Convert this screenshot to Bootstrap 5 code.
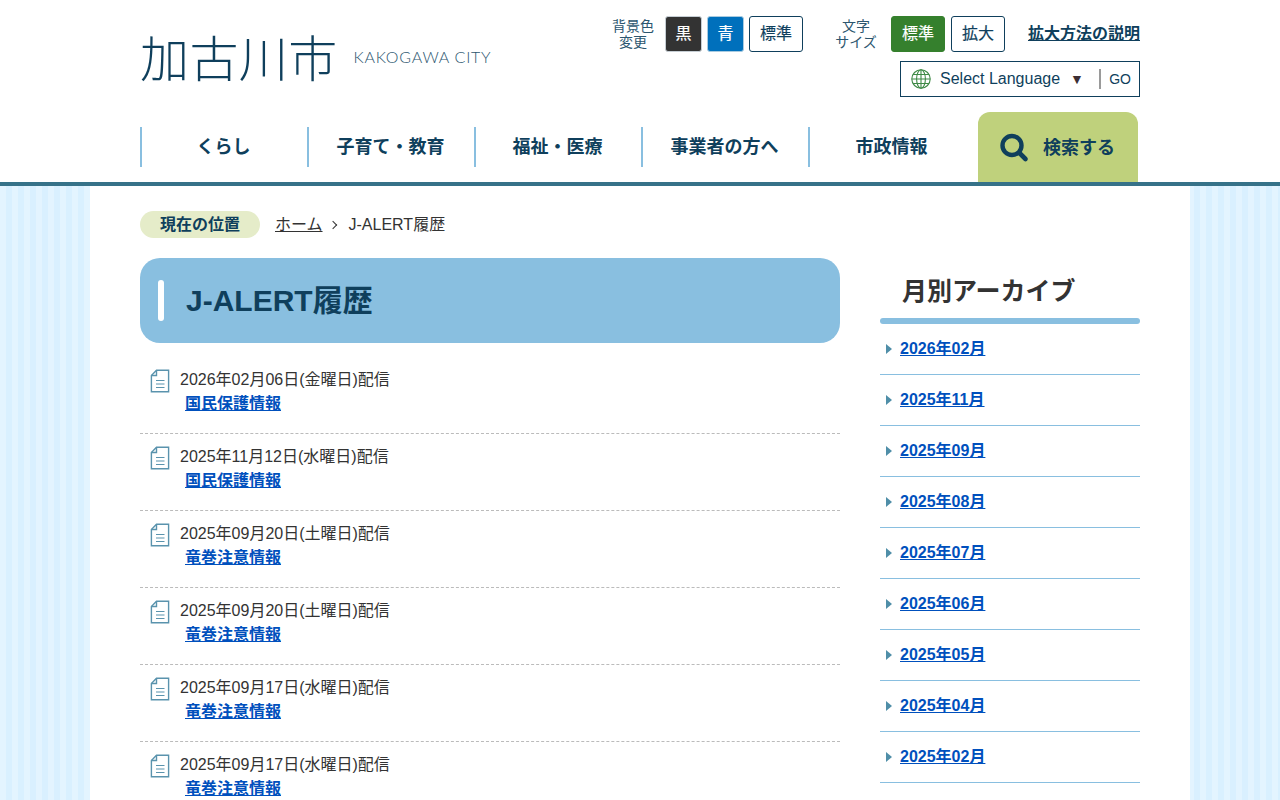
<!DOCTYPE html>
<html lang="ja">
<head>
<meta charset="utf-8">
<title>J-ALERT履歴</title>
<link href="https://cdn.jsdelivr.net/npm/bootstrap@5.3.0/dist/css/bootstrap.min.css" rel="stylesheet">
<style>
:root{--ink:#0f3f5c;--sky:#89bfe0;--txt:#333;}
html,body{height:800px;overflow:hidden}
body{font-family:"Liberation Sans","Noto Sans CJK JP",sans-serif;font-size:16px;color:var(--txt);line-height:24px;background:#fff}
.wrap{width:1000px;margin:0 auto}
.site-head{height:186px;border-bottom:4px solid #367289;background:#fff}
.head-top{height:112px}
.logo-ja{font-family:"Noto Sans CJK JP",sans-serif;font-weight:300;font-size:49px;line-height:60px;color:var(--ink);letter-spacing:.4px;margin-top:26px;white-space:nowrap;-webkit-text-stroke:0}
.logo-en{font-family:Lato,sans-serif;font-weight:300;font-size:16px;line-height:20px;color:#2c566f;letter-spacing:.75px;margin-left:16px;margin-top:21px;white-space:nowrap}
.tools{padding-top:16px;width:529px}
.tool-label{font-size:14px;line-height:16px;color:#2c566f;text-align:center}
.tool-btn{height:36px;border:1px solid var(--ink);border-radius:3px;background:#fff;color:var(--ink);font-size:16px;line-height:34px;font-weight:400;padding:0;text-align:center;-webkit-text-stroke:.2px}
.tb-dark{width:37px;background:#333;color:#fff;border-color:#c6ced4;box-shadow:0 0 0 1px #3334 inset}
.tb-blue{width:37px;background:#0070bc;color:#fff;border-color:#a9cbe0}
.tb-std{width:54px}
.tb-green{width:54px;background:#35802d;color:#fff;border-color:#35802d}
.how-to{color:var(--ink);font-weight:700;font-size:16px;text-decoration:underline}
.lang-box{width:240px;height:36px;border:1px solid var(--ink);margin-top:9px;color:var(--ink);padding-left:10px}
.lang-txt{margin-left:9px;line-height:34px;white-space:nowrap}
.lang-arrow{margin-left:10px;font-size:14px;color:#3c2e34;width:14px;line-height:34px}
.lang-go{border-left:2px solid #9a9a9a;height:20px;line-height:20px;font-size:14px;padding-left:8px;margin-left:auto;margin-right:8px}
.gnav{height:70px}
.gnav-item{width:167px;height:40px;margin-top:15px;border-left:2px solid var(--sky);color:var(--ink);font-weight:700;font-size:18px;line-height:40px;text-align:center;text-decoration:none;padding-right:2px}
.gnav-search{width:160px;height:70px;margin-left:3px;background:#bfd17c;border-radius:12px 12px 0 0;color:var(--ink);font-weight:700;font-size:18px;text-decoration:none;padding-left:21px;padding-top:1px}
.gnav-search svg{margin-right:14px}
.stage{height:614px;overflow:hidden;background:repeating-linear-gradient(90deg,#e3f4ff 0 6px,#d9f0ff 6px 12px)}
.sheet{width:1100px;height:100%;margin:0 auto;background:#fff;padding:25px 50px 0}
.crumbs{height:27px;font-size:16px}
.crumb-tag{width:120px;height:27px;line-height:27px;border-radius:14px;background:#e5ecc9;color:var(--ink);font-weight:700;text-align:center}
.crumb-home{color:var(--txt);margin-left:15px}
.crumb-sep{width:6px;height:6px;border-top:1.5px solid #333;border-right:1.5px solid #333;transform:rotate(45deg);margin:0 13px 0 7px}
.columns{margin-top:20px}
.main-col{width:700px}
.side-col{width:260px}
.page-title{height:85px;background:var(--sky);border-radius:20px;margin:0;padding:0 18px;color:var(--ink);font-size:30px;font-weight:700;line-height:85px}
.page-title::before{content:"";width:6px;height:41px;border-radius:3px;background:#fff;margin-right:22px;flex:none}
.feed{margin-top:14px}
.feed-row{height:77px;border-bottom:1px dashed #bbb;padding:11px 0 0 10px}
.feed-row:last-child{border-bottom:0}
.feed-ico{flex:none;margin-top:1px;margin-right:10px}
.feed-link,.arch-link{color:#0050bd;font-weight:700}
.feed-link{margin-left:5px;display:inline-block}
.arch-title{font-size:25px;line-height:36px;font-weight:700;margin:15px 0 0;padding-left:22px;padding-bottom:9px;color:var(--txt);border:0}
.arch-bar{height:6px;border-radius:3px;background:var(--sky)}
.arch-row{height:51px;border-bottom:1px solid var(--sky);padding:0 0 0 6px}
.arch-row::before{content:"";width:0;height:0;border-left:6px solid #4f8ea8;border-top:5px solid transparent;border-bottom:5px solid transparent;margin-right:8px}
</style>
</head>
<body>
<header class="site-head">
  <div class="wrap">
    <div class="head-top d-flex justify-content-between">
      <div class="d-flex align-items-start">
        <div class="logo-ja">加古川市</div>
        <div class="logo-en" style="margin-top:47px">KAKOGAWA CITY</div>
      </div>
      <div class="tools">
        <div class="d-flex align-items-center">
          <div class="tool-label" style="width:44px;margin-right:10px;margin-left:0">背景色<br>変更</div>
          <button class="tool-btn tb-dark me-1" type="button">黒</button>
          <button class="tool-btn tb-blue" type="button" style="margin-left:1px;margin-right:5px">青</button>
          <button class="tool-btn tb-std" type="button">標準</button>
          <div class="tool-label" style="width:46px;margin-left:30px;margin-right:12px">文字<br>サイズ</div>
          <button class="tool-btn tb-green" type="button" style="margin-right:6px">標準</button>
          <button class="tool-btn tb-std" type="button">拡大</button>
          <a class="how-to ms-auto" href="#">拡大方法の説明</a>
        </div>
        <div class="d-flex justify-content-end">
          <div class="lang-box d-flex align-items-center">
            <svg width="20" height="20" viewBox="0 0 20 20" fill="none" stroke="#3f8a46" stroke-width="1.1"><circle cx="10" cy="10" r="9.2"/><ellipse cx="10" cy="10" rx="4.4" ry="9.2"/><path d="M10 .8v18.4M.8 10h18.4M2 5.5h16M2 14.5h16"/></svg>
            <span class="lang-txt">Select Language</span>
            <span class="lang-arrow">▼</span>
            <span class="lang-go">GO</span>
          </div>
        </div>
      </div>
    </div>
    <nav class="gnav d-flex">
      <a class="gnav-item" href="#">くらし</a>
      <a class="gnav-item" href="#">子育て・教育</a>
      <a class="gnav-item" href="#">福祉・医療</a>
      <a class="gnav-item" href="#">事業者の方へ</a>
      <a class="gnav-item" href="#" style="border-left-color:var(--sky)">市政情報</a>
      <a class="gnav-search d-flex align-items-center" href="#">
        <svg width="30" height="30" viewBox="0 0 30 30" fill="none" stroke="#0f3f5c"><circle cx="13" cy="12.5" r="9.5" stroke-width="4.4"/><path d="M20.5 20l6 6" stroke-width="4.6" stroke-linecap="round"/></svg>
        <span>検索する</span>
      </a>
    </nav>
  </div>
</header>
<div class="stage">
  <div class="sheet">
    <div class="crumbs d-flex align-items-center">
      <span class="crumb-tag">現在の位置</span>
      <a class="crumb-home" href="#">ホーム</a>
      <span class="crumb-sep"></span>
      <span>J-ALERT履歴</span>
    </div>
    <div class="columns d-flex justify-content-between">
      <main class="main-col">
        <h1 class="page-title d-flex align-items-center">J-ALERT履歴</h1>
        <div class="feed" id="feed"></div>
      </main>
      <aside class="side-col">
        <h2 class="arch-title">月別アーカイブ</h2>
        <div class="arch-bar"></div>
        <div id="arch"></div>
      </aside>
    </div>
  </div>
</div>
<script>
const ico='<svg class="feed-ico" width="20" height="24" viewBox="0 0 20 24" fill="none" stroke="#5a93ad" stroke-width="1.4"><path d="M6.5 1.2H18.6V22.8H1.4V6.5z"/><path d="M6.5 1.2V6.5H1.4"/><path d="M6 11.5h8.5M6 15h8.5M6 18.5h8.5" stroke-width="1.1"/></svg>';
const rows=[["2026年02月06日(金曜日)配信","国民保護情報"],["2025年11月12日(水曜日)配信","国民保護情報"],["2025年09月20日(土曜日)配信","竜巻注意情報"],["2025年09月20日(土曜日)配信","竜巻注意情報"],["2025年09月17日(水曜日)配信","竜巻注意情報"],["2025年09月17日(水曜日)配信","竜巻注意情報"]];
document.getElementById('feed').innerHTML=rows.map(r=>`<div class="feed-row d-flex">${ico}<div><div>${r[0]}</div><a class="feed-link" href="#">${r[1]}</a></div></div>`).join('');
const months=["2026年02月","2025年11月","2025年09月","2025年08月","2025年07月","2025年06月","2025年05月","2025年04月","2025年02月"];
document.getElementById('arch').innerHTML=months.map(m=>`<div class="arch-row d-flex align-items-center"><a class="arch-link" href="#">${m}</a></div>`).join('');
</script>
<script src="https://cdn.jsdelivr.net/npm/bootstrap@5.3.0/dist/js/bootstrap.bundle.min.js"></script>
</body>
</html>
